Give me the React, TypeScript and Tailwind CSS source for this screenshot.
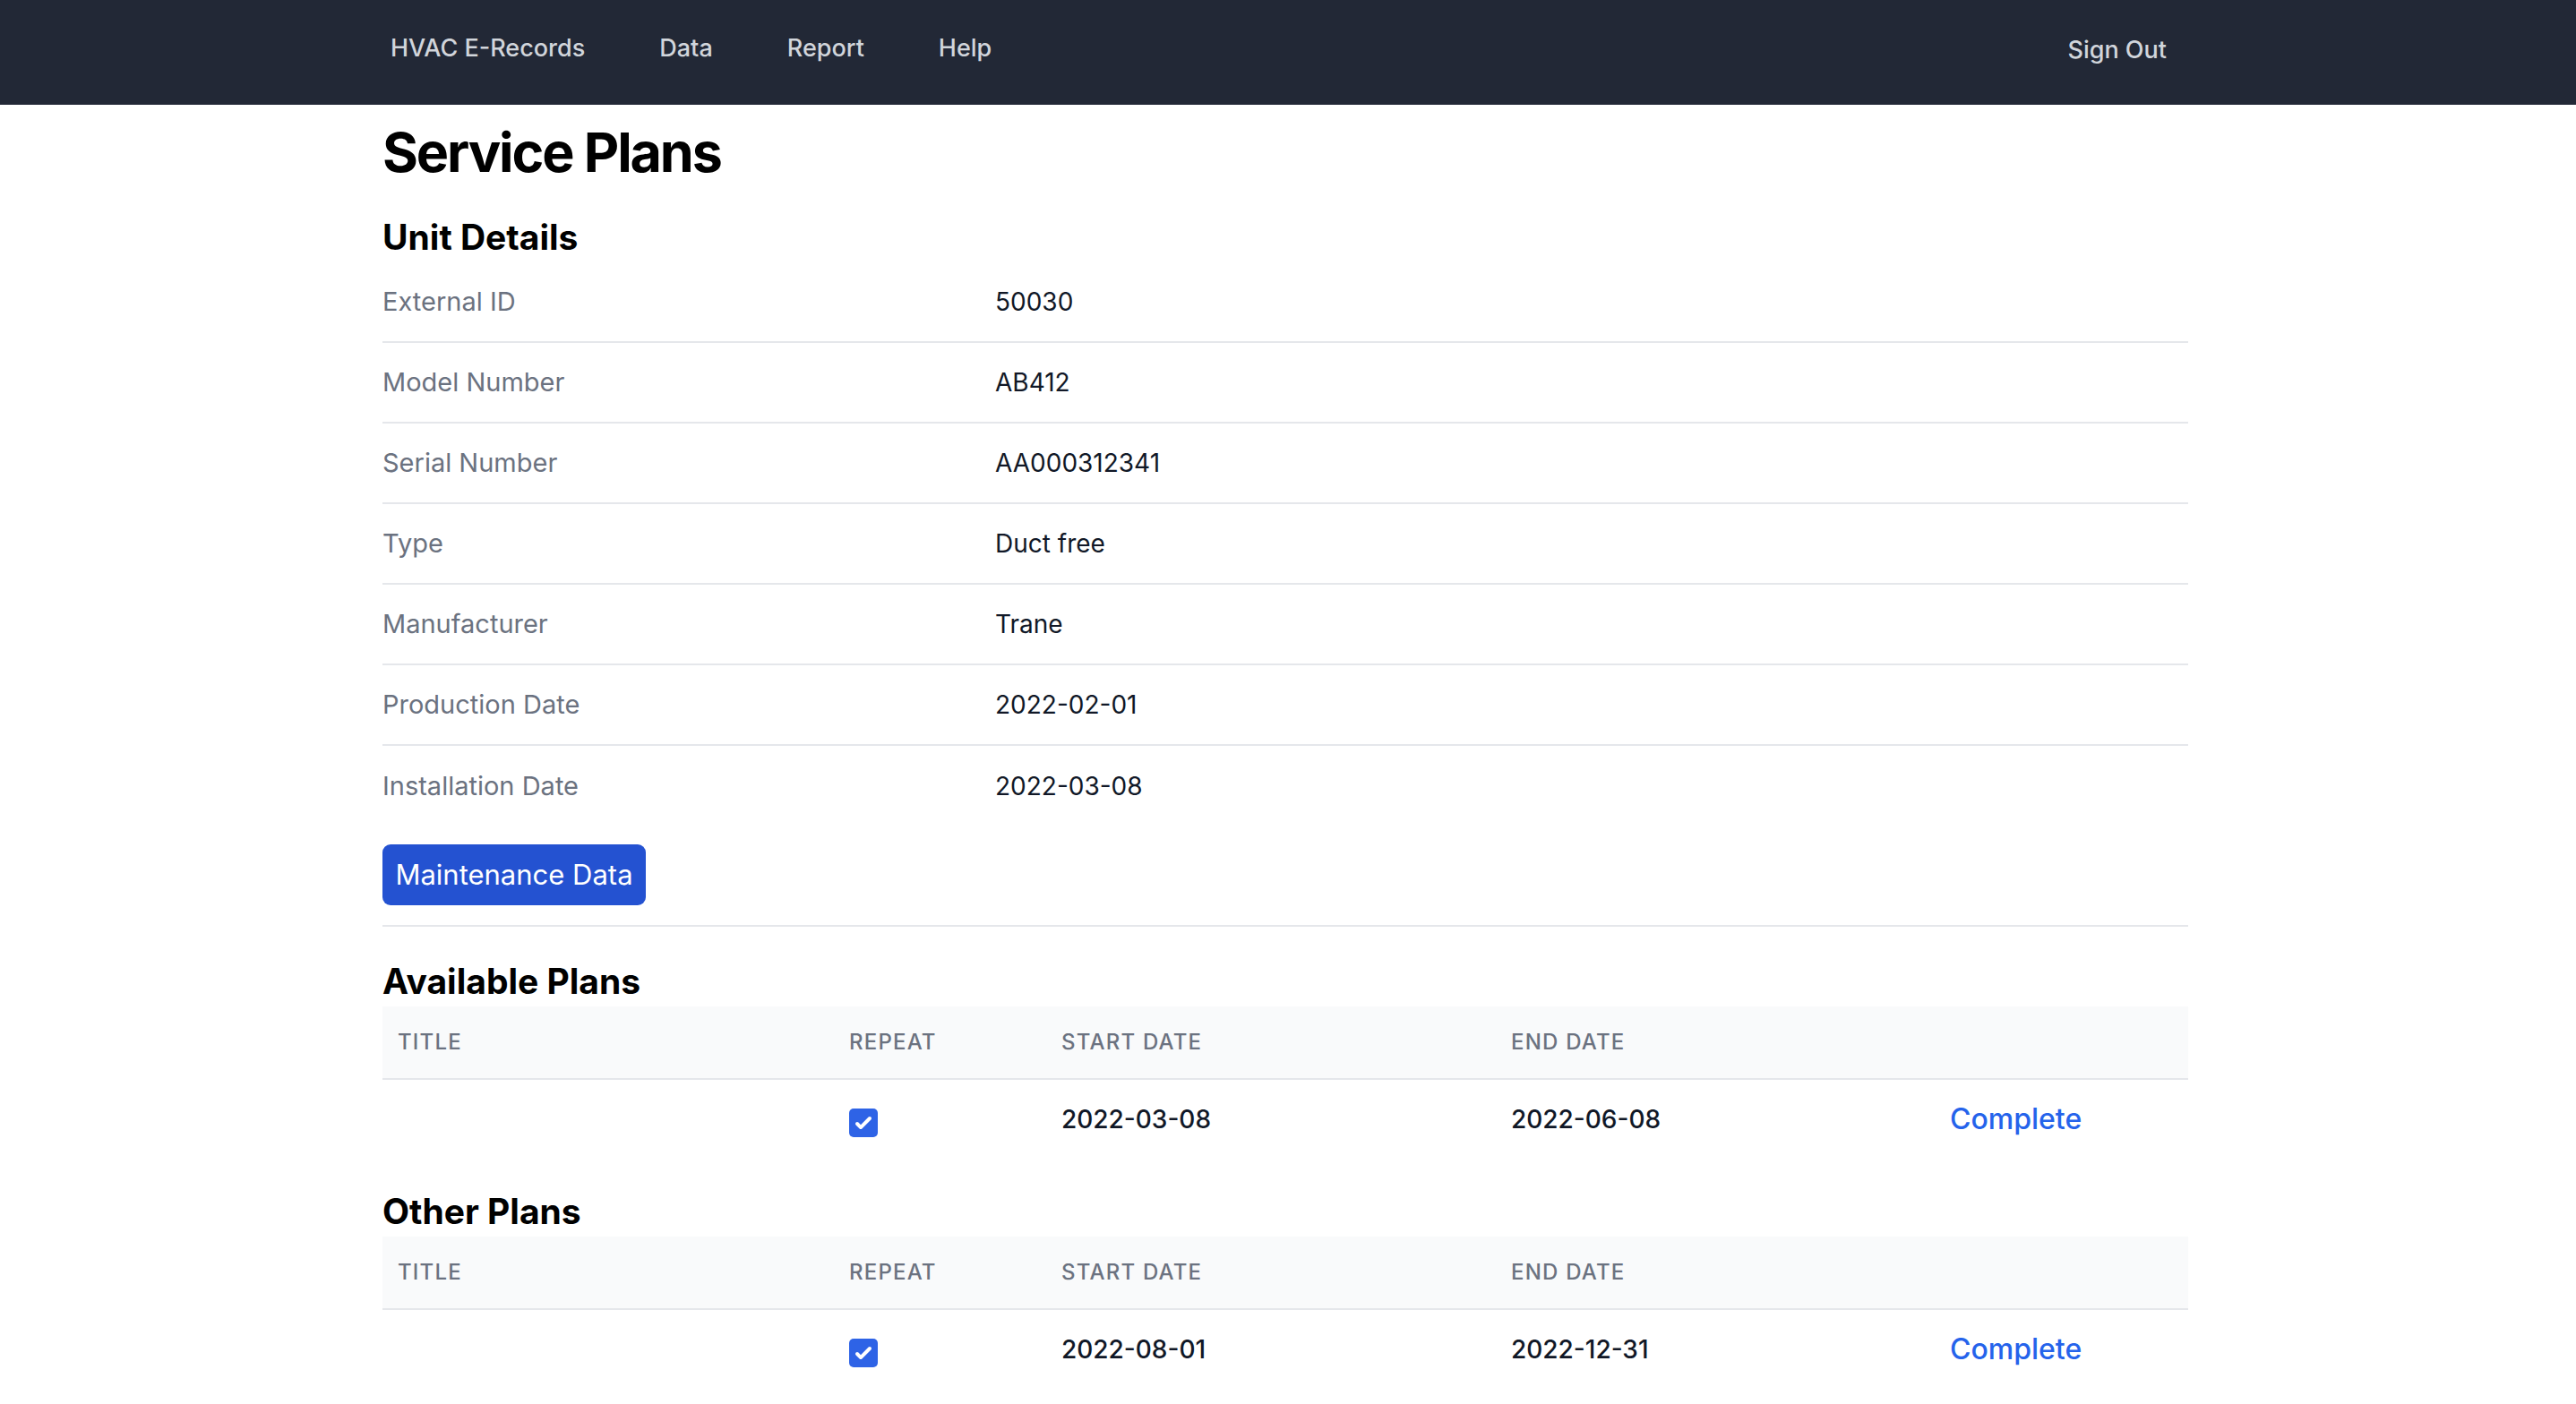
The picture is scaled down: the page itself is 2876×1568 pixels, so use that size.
import React from 'react';

const details: [string, string][] = [
    ['External ID', '50030'],
    ['Model Number', 'AB412'],
    ['Serial Number', 'AA000312341'],
    ['Type', 'Duct free'],
    ['Manufacturer', 'Trane'],
    ['Production Date', '2022-02-01'],
    ['Installation Date', '2022-03-08'],
];

const Checkbox = () => (
    <div className="w-[32px] h-[32px] rounded-[5px] bg-[#2e63e6] flex items-center justify-center mt-[8px]">
        <svg viewBox="0 0 16 16" className="w-[32px] h-[32px]" fill="white">
            <path d="M12.207 4.793a1 1 0 010 1.414l-5 5a1 1 0 01-1.414 0l-2-2a1 1 0 011.414-1.414L6.5 9.086l4.293-4.293a1 1 0 011.414 0z" />
        </svg>
    </div>
);

const PlanTable = ({ title, start, end }: { title: string; start: string; end: string }) => (
    <section>
        <h2 className="text-[39px] leading-[46px] font-bold text-black">{title}</h2>
        <div className="mt-[5px]">
            <div className="grid grid-cols-[504px_237px_502px_490px_1fr] h-[82px] items-center bg-[#f9fafb] border-b-2 border-[#e5e7eb] text-[24px] font-medium tracking-wider uppercase text-[#6b7280]">
                <div className="pl-[17px]">Title</div>
                <div className="pl-[17px]">Repeat</div>
                <div className="pl-[17px]">Start Date</div>
                <div className="pl-[17px]">End Date</div>
                <div />
            </div>
            <div className="grid grid-cols-[504px_237px_502px_490px_1fr] h-[88px] items-center">
                <div className="pl-[17px]" />
                <div className="pl-[17px]"><Checkbox /></div>
                <div className="pl-[17px] text-[28px] font-medium text-[#111827]">{start}</div>
                <div className="pl-[17px] text-[28px] font-medium text-[#111827]">{end}</div>
                <div className="pl-[17px]">
                    <a href="#" className="text-[32px] font-medium text-[#2563eb]">Complete</a>
                </div>
            </div>
        </div>
    </section>
);

export default function App() {
    return (
        <div className="min-h-screen bg-white font-['Inter','Noto_Sans',sans-serif]">
            <nav className="h-[117px] bg-[#222836]">
                <div className="ml-[427px] w-[2016px] h-full flex items-center justify-between pb-[9px] text-[27px] font-medium text-[#d1d5db]">
                    <div className="flex items-center gap-[83px] pl-[9px]">
                        <a href="#">HVAC E-Records</a>
                        <a href="#">Data</a>
                        <a href="#">Report</a>
                        <a href="#">Help</a>
                    </div>
                    <a href="#" className="pr-[24px] pt-[4px]">Sign Out</a>
                </div>
            </nav>

            <main className="ml-[427px] w-[2016px]">
                <h1 className="mt-[22px] text-[61px] leading-[62px] font-bold tracking-[-0.035em] text-black">Service Plans</h1>

                <h2 className="mt-[41px] text-[39px] leading-[46px] font-bold text-black">Unit Details</h2>
                <div className="mt-[5px]">
                    {details.map(([label, value], i) => (
                        <div
                            key={label}
                            className={`grid grid-cols-[684px_1fr] h-[90px] items-center ${i < details.length - 1 ? 'border-b-2 border-[#e5e7eb]' : ''}`}
                        >
                            <div className="text-[29px] text-[#6b7280]">{label}</div>
                            <div className="text-[28px] text-[#111827]">{value}</div>
                        </div>
                    ))}
                </div>

                <button className="mt-[20px] w-[294px] h-[68px] rounded-[9px] bg-[#2452d1] text-white text-[31px] flex items-center justify-center">
                    Maintenance Data
                </button>

                <div className="mt-[22px] border-t-2 border-[#e5e7eb]" />

                <div className="mt-[38px]">
                    <PlanTable title="Available Plans" start="2022-03-08" end="2022-06-08" />
                </div>
                <div className="mt-[36px]">
                    <PlanTable title="Other Plans" start="2022-08-01" end="2022-12-31" />
                </div>
            </main>
        </div>
    );
}
